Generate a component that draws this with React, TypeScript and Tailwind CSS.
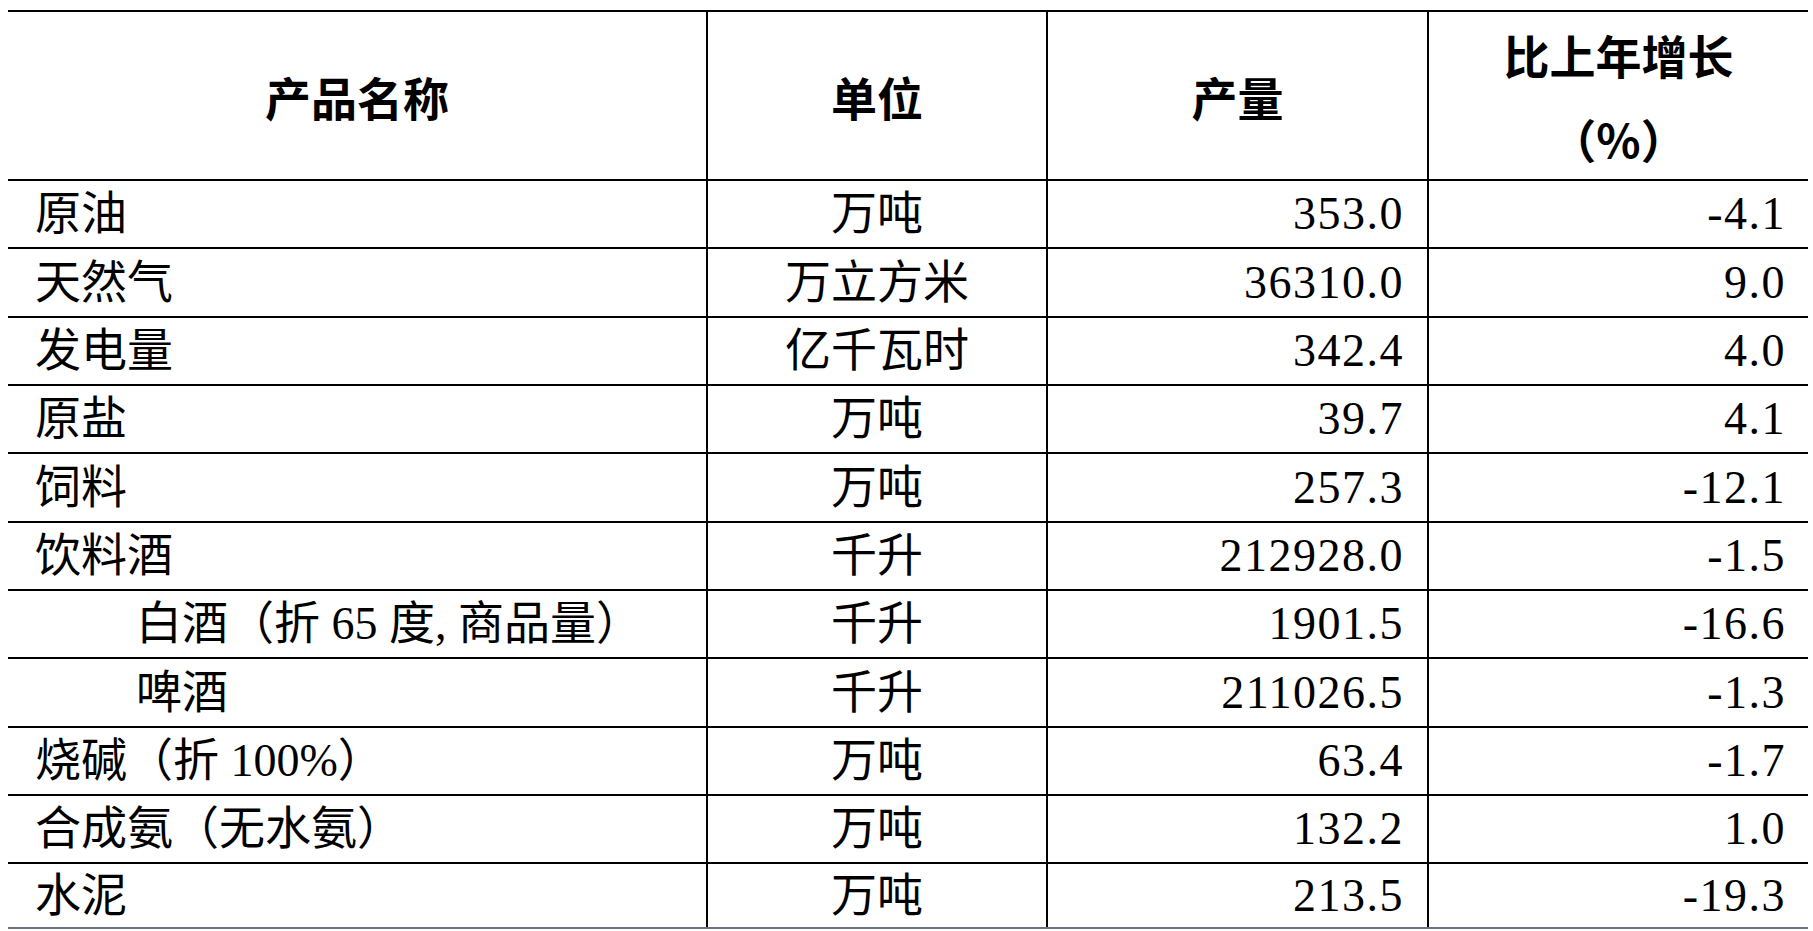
import React from 'react';

type Row = {
  name: string;
  unit: string;
  output: string;
  growth: string;
  indent?: boolean;
};

const rows: Row[] = [
  { name: '原油', unit: '万吨', output: '353.0', growth: '-4.1' },
  { name: '天然气', unit: '万立方米', output: '36310.0', growth: '9.0' },
  { name: '发电量', unit: '亿千瓦时', output: '342.4', growth: '4.0' },
  { name: '原盐', unit: '万吨', output: '39.7', growth: '4.1' },
  { name: '饲料', unit: '万吨', output: '257.3', growth: '-12.1' },
  { name: '饮料酒', unit: '千升', output: '212928.0', growth: '-1.5' },
  { name: '白酒（折 65 度, 商品量）', unit: '千升', output: '1901.5', growth: '-16.6', indent: true },
  { name: '啤酒', unit: '千升', output: '211026.5', growth: '-1.3', indent: true },
  { name: '烧碱（折 100%）', unit: '万吨', output: '63.4', growth: '-1.7' },
  { name: '合成氨（无水氨）', unit: '万吨', output: '132.2', growth: '1.0' },
  { name: '水泥', unit: '万吨', output: '213.5', growth: '-19.3' },
];

const cols = 'grid grid-cols-[698px_340px_381px_381px]';

const App: React.FC = () => {
  return (
    <div className="h-[931px] overflow-hidden bg-white pl-[8px] pt-[10px] text-black font-['Liberation_Serif','Noto_Sans_CJK_SC',serif] text-[46px] leading-none">
      <div className="w-[1800px]">
        {/* header */}
        <div className={`${cols} h-[169px] border-t-[2px] border-black font-bold font-['Noto_Sans_CJK_SC',sans-serif]`}>
          <div className="flex items-center justify-center">产品名称</div>
          <div className="flex items-center justify-center border-l-[2px] border-black">单位</div>
          <div className="flex items-center justify-center border-l-[2px] border-black">产量</div>
          <div className="flex flex-col items-center justify-center gap-[38px] border-l-[2px] border-black">
            <span>比上年增长</span>
            <span>（%）</span>
          </div>
        </div>

        {rows.map((r, i) => {
          const last = i === rows.length - 1;
          return (
            <div
              key={i}
              className={`${cols} border-t-[2px] border-black ${last ? 'h-[67px] border-b-[2px] border-b-gray-500' : 'h-[68.35px]'}`}
            >
              <div className={`flex items-center ${r.indent ? 'pl-[128px]' : 'pl-[27px]'}`}>{r.name}</div>
              <div className="flex items-center justify-center border-l-[2px] border-black">{r.unit}</div>
              <div className="flex items-center justify-end border-l-[2px] border-black pr-[23px] tracking-[1.5px]">{r.output}</div>
              <div className="flex items-center justify-end border-l-[2px] border-black pr-[22px] tracking-[1.5px]">{r.growth}</div>
            </div>
          );
        })}
      </div>
    </div>
  );
};

export default App;
